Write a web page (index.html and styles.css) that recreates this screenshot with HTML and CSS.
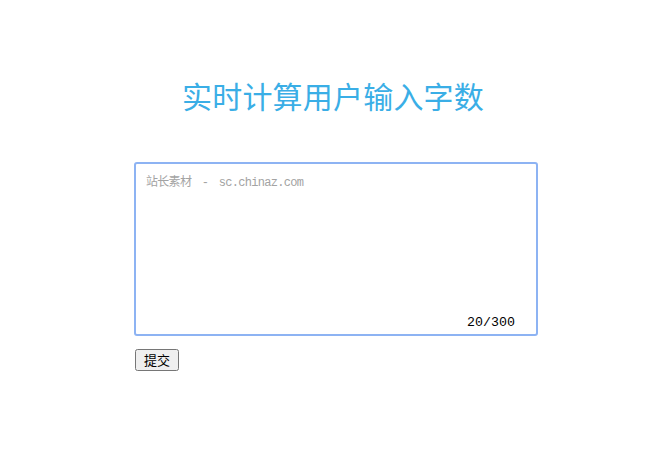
FILE: index.html
```html
<!DOCTYPE HTML>
<html>

<head>
    <meta charset="utf-8">
    <title>实时计算用户输入字数</title>
    <link rel="stylesheet" href="styles.css">
</head>

<body>
    <div class="wrap">
        <h1 class="title">实时计算用户输入字数</h1>
        <div class="box">
            <textarea class="text" placeholder="站长素材 - sc.chinaz.com"></textarea>
            <span class="count">20/300</span>
        </div>
        <button type="button" class="submit">提交</button>
    </div>
</body>

</html>
```

FILE: styles.css
```css
body {
    margin: 0;
    font-family: "Noto Sans CJK SC", "Liberation Sans", sans-serif;
}

.wrap {
    width: 404px;
    margin-left: 134px;
    padding-top: 75px;
}

.title {
    margin: 0 0 47px;
    padding-right: 6px;
    text-align: center;
    font-size: 30px;
    font-weight: normal;
    line-height: 40px;
    letter-spacing: 0.2px;
    color: #3aaee6;
}

.box {
    position: relative;
    height: 174px;
}

.text {
    display: block;
    box-sizing: border-box;
    width: 404px;
    height: 174px;
    margin: 0;
    padding: 10px 10px;
    border: 2px solid #8db3f3;
    border-radius: 3px;
    outline: none;
    resize: none;
    font-family: "Liberation Mono", "Noto Sans CJK SC", monospace;
    font-size: 12px;
    letter-spacing: -0.7px;
    word-spacing: 4px;
    line-height: 18px;
}

.text::placeholder {
    color: #a3a3a3;
}

.count {
    position: absolute;
    right: 23px;
    bottom: 6px;
    font-family: "Liberation Mono", monospace;
    font-size: 13.3px;
    color: #000;
}

.submit {
    margin-top: 13px;
    margin-left: 1px;
    font-family: "Noto Sans CJK SC", sans-serif;
    font-size: 13px;
    padding: 1px 7px;
    height: 22px;
    line-height: 16px;
}
```
